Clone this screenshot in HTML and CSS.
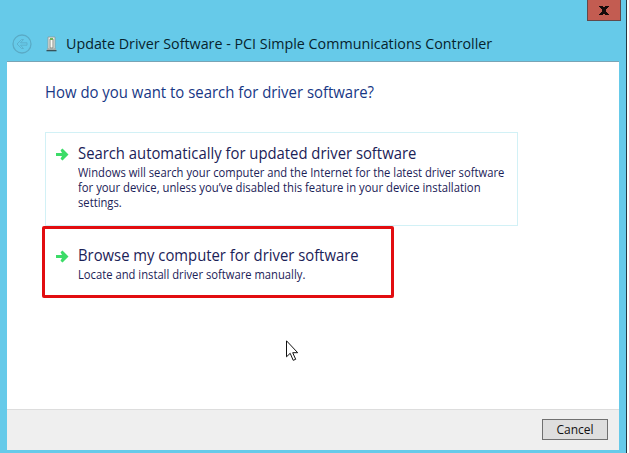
FILE: index.html
```html
<!DOCTYPE html>
<html lang="en">
<head>
<meta charset="utf-8">
<title>Update Driver Software</title>
<link rel="stylesheet" href="styles.css">
</head>
<body>
<div class="window">
  <div class="caption"><button class="close" aria-label="Close"><svg width="10" height="9" viewBox="0 0 10 9"><path d="M0 0h4v1h2V0h4v1H9v1H8v1H7v3h1v1h1v1h1v1H6V8H4v1H0V8h1V7h1V6h1V3H2V2H1V1H0z" fill="#160b0b"/></svg></button></div>
  <header class="titlebar">
    <svg class="back" width="20" height="20" viewBox="0 0 20 20" fill="none" stroke="#5aabc6"><circle cx="10" cy="10" r="9" stroke-width="1.3"/><path d="M5 10l4.500-4.500h2L8.500 8.800H15v2.400H8.500l3 3.300h-2z" stroke-width=".8"/></svg>
    <svg class="device" width="11" height="16" viewBox="0 0 11 16"><path d="M2 1h7v12H2z" fill="#e7e9e5" stroke="#899a9b" stroke-width=".8"/><path d="M4 3h3v9H4z" fill="#f9faf5" stroke="#70756f" stroke-width=".8"/><path d="M4 2h3v2H4z" fill="#71b35b"/><path d="M1 12.500h9v1.500H1z" fill="#a3adab"/><path d="M.5 14h10v1.300H.5z" fill="#38535b"/></svg>
    <h1 class="title"><span>Update Driver Software - PCI Simple Communications Controller</span></h1>
  </header>
  <main class="panel">
    <div class="content">
      <h2 class="question"><span>How do you want to search for driver software?</span></h2>
      <section class="option auto">
        <svg class="arrow" width="13" height="13" viewBox="0 0 13 13"><path d="M0 5h6L4.500 2.200 6.500.5 12.500 6.500l-6 6-2-1.700L6 8H0z" fill="#3cdc68"/></svg>
        <div>
          <h3><span>Search automatically for updated driver software</span></h3>
          <p><span>Windows will search your computer and the Internet for the latest driver software</span><br><span class="second">for your device, unless you’ve disabled this feature in your device installation</span><br><span>settings.</span></p>
        </div>
      </section>
      <section class="option browse">
        <svg class="arrow" width="13" height="13" viewBox="0 0 13 13"><path d="M0 5h6L4.500 2.200 6.500.5 12.500 6.500l-6 6-2-1.700L6 8H0z" fill="#3cdc68"/></svg>
        <div>
          <h3><span>Browse my computer for driver software</span></h3>
          <p><span>Locate and install driver software manually.</span></p>
        </div>
      </section>
    </div>
    <footer class="footer"><button class="cancel"><span>Cancel</span></button></footer>
  </main>
  <svg class="cursor" width="13" height="22" viewBox="0 0 13 22"><path d="M.5.8v16l3.700-3.500 3 7 2.500-1-3-6.600h5z" fill="#fff" stroke="#111"/></svg>
</div>
</body>
</html>
```
FILE: styles.css
```css
* { box-sizing: border-box; }
body { margin: 0; background: #fff; font-family: "Open Sans", "Noto Sans", sans-serif; overflow: hidden; }
h1, h2, h3, p { margin: 0; font-weight: 400; white-space: nowrap; }
svg { display: block; flex: none; }
button { font: inherit; padding: 0; border-radius: 0; display: flex; align-items: center; justify-content: center; }
/* condensed text runs */
h1 span, h2 span, h3 span, p span { display: inline-block; vertical-align: top; transform-origin: 0 50%; }
h1 span { transform: scaleX(.953); }
h2 span { transform: scaleX(.932); }
h3 span { transform: scaleX(.927); }
p span { transform: scaleX(.935); }
p .second { transform: scaleX(.942); }
.window { position: relative; width: 627px; height: 453px; background: #66cae9; border-right: 1px solid #243a42; padding: 0 7px 3px; display: flex; flex-direction: column; }
.caption { height: 21px; display: flex; justify-content: flex-end; margin-right: -2px; }
.close { width: 34px; height: 21px; background: #c35c51; border: 1px solid #61494b; border-top: 0; }
.titlebar { height: 41px; padding: 4px 0 0 5px; border-bottom: 1px solid #79a4b5; display: flex; align-items: center; }
.back { margin-top: 2px; }
.device { margin: 2px 0 0 14px; }
.title { margin: 0 0 1px 9px; font-size: 15px; line-height: 20px; color: #07232d; }
.panel { flex: 1; width: 612px; background: #fff; display: flex; flex-direction: column; }
.content { flex: 1; padding: 18px 0 0 35px; }
.question { font-size: 16px; line-height: 24px; color: #173785; padding-left: 3px; margin-bottom: 28px; }
.option { display: flex; color: #1b2257; }
.option .arrow { margin: 15px 9px 0 0; }
.auto { width: 473px; height: 94px; margin-left: 3px; padding: 0 0 0 10px; border: 1px solid #d2f1f6; }
.option h3 { font-size: 16px; line-height: 22px; margin-top: 9px; }
.option p { font-size: 12px; line-height: 15px; padding-top: 1px; }
.browse { width: 352px; height: 72px; border: 3px solid #e20d10; border-radius: 2px; padding-left: 11px; }
.browse .arrow { margin-top: 21px; }
.browse h3 { margin-top: 15px; }
.footer { height: 41px; background: #efefef; border-top: 1px solid #ddd; display: flex; justify-content: flex-end; padding: 9px 11px 0 0; }
.cancel { width: 66px; height: 21px; border: 1px solid #707070; background: #dedede; color: #111; font-size: 12px; line-height: 18px; }
.cursor { position: absolute; left: 286px; top: 340px; }
```
